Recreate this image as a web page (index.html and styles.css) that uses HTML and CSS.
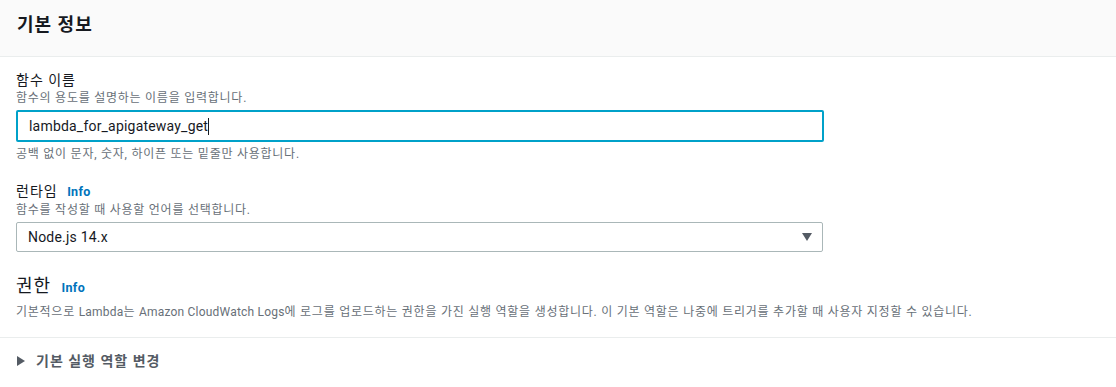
FILE: index.html
```html
<!DOCTYPE html>
<html lang="ko">
<head>
    <meta charset="UTF-8">
    <title>기본 정보</title>
    <link rel="stylesheet" href="styles.css">
</head>
<body>

<div class="panel">
    <header class="panel-header">
        <h2>기본 정보</h2>
    </header>

    <div class="panel-body">
        <div class="field">
            <div class="label">함수 이름</div>
            <div class="desc">함수의 용도를 설명하는 이름을 입력합니다.</div>
            <div class="text-input"><span>lambda_for_apigateway_get</span><span class="caret"></span></div>
            <div class="hint">공백 없이 문자, 숫자, 하이픈 또는 밑줄만 사용합니다.</div>
        </div>

        <div class="field runtime">
            <div class="label">런타임 <a class="info">Info</a></div>
            <div class="desc">함수를 작성할 때 사용할 언어를 선택합니다.</div>
            <div class="select">
                <span>Node.js 14.x</span>
                <svg width="10" height="8" viewBox="0 0 10 8"><path d="M0 0 H10 L5 8 Z" fill="#545b64"/></svg>
            </div>
        </div>

        <div class="field perms">
            <div class="perm-title">권한 <a class="info">Info</a></div>
            <div class="desc">기본적으로 <span class="latin">Lambda</span>는 <span class="latin">Amazon CloudWatch Logs</span>에 로그를 업로드하는 권한을 가진 실행 역할을 생성합니다. 이 기본 역할은 나중에 트리거를 추가할 때 사용자 지정할 수 있습니다.</div>
        </div>
    </div>

    <div class="expander">
        <svg width="8" height="10" viewBox="0 0 8 10"><path d="M0 0 L8 5 L0 10 Z" fill="#545b64"/></svg>
        <span>기본 실행 역할 변경</span>
    </div>
</div>

</body>
</html>
```

FILE: styles.css
```css
* {
    box-sizing: border-box;
}
body {
    margin: 0;
    padding: 0;
    background: #ffffff;
    font-family: Roboto, "Noto Sans CJK KR", sans-serif;
    color: #16191f;
}
.panel {
    width: 1116px;
}
.panel-header {
    height: 57px;
    background-color: #fafafa;
    border-bottom: 1px solid #eaeded;
    padding: 13px 0 0 17px;
}
.panel-header h2 {
    margin: 0;
    font-size: 18px;
    font-weight: bold;
    line-height: 24px;
    letter-spacing: 1px;
}
.panel-body {
    padding: 13px 16px 0 16px;
    border-bottom: 1px solid #eaeded;
}
.label {
    font-size: 14px;
    line-height: 20px;
    letter-spacing: 1px;
}
.desc, .hint {
    font-size: 12px;
    line-height: 16px;
    color: #687078;
    letter-spacing: 0.75px;
}
.latin {
    letter-spacing: 0.2px;
}
.info {
    font-size: 12.5px;
    font-weight: bold;
    color: #0073bb;
    margin-left: 5px;
    letter-spacing: 0.3px;
}
.text-input {
    margin-top: 4px;
    width: 808px;
    height: 32px;
    border: 2px solid #00a1c9;
    border-radius: 2px;
    display: flex;
    align-items: center;
    padding-left: 11px;
    font-size: 14px;
    letter-spacing: 0.2px;
}
.caret {
    display: inline-block;
    width: 1px;
    height: 17px;
    background: #16191f;
}
.hint {
    margin-top: 4px;
}
.runtime {
    margin-top: 19px;
}
.select {
    margin-top: 4px;
    width: 807px;
    height: 30px;
    border: 1px solid #aab7b8;
    border-radius: 2px;
    display: flex;
    align-items: center;
    justify-content: space-between;
    padding: 0 10px 0 11px;
    font-size: 14px;
    letter-spacing: 0.2px;
}
.perms {
    margin-top: 22px;
    padding-bottom: 17px;
}
.perm-title {
    font-size: 18px;
    line-height: 24px;
    letter-spacing: 1px;
}
.perms .desc {
    margin-top: 4px;
}
.expander {
    display: flex;
    align-items: center;
    gap: 11px;
    padding: 12px 17px;
    font-size: 14px;
    font-weight: bold;
    line-height: 22px;
    color: #545b64;
    letter-spacing: 1px;
}
```
